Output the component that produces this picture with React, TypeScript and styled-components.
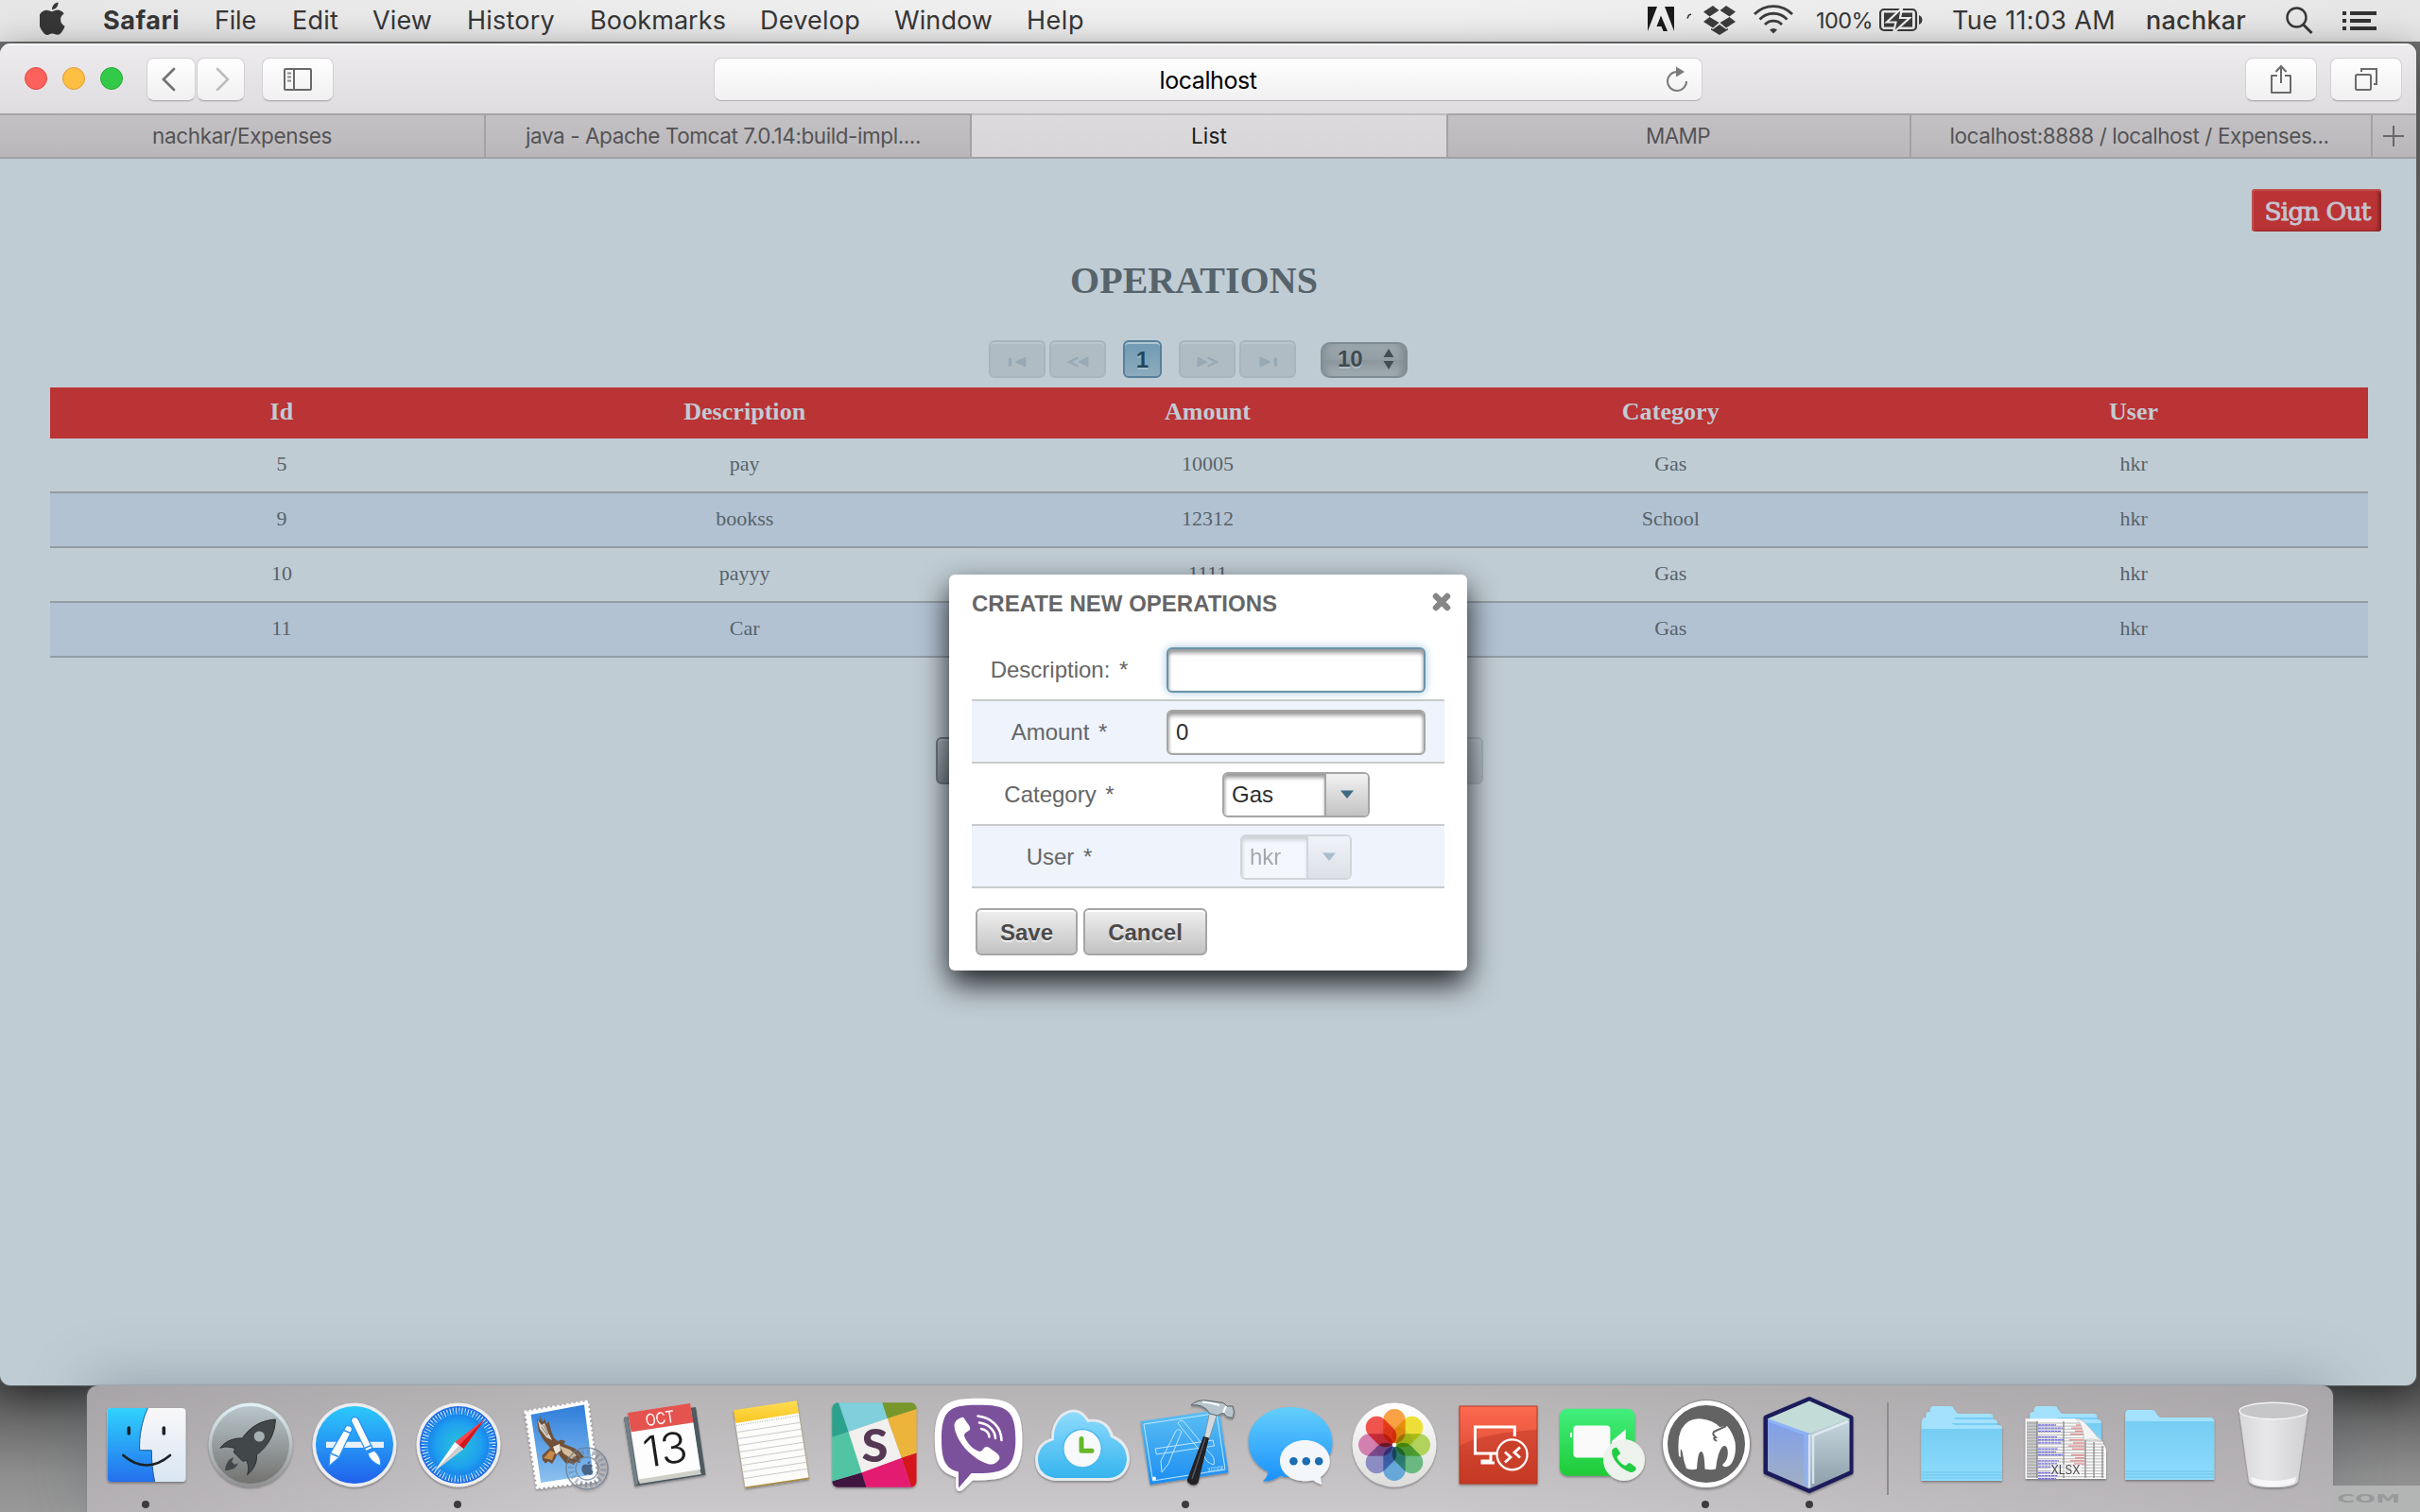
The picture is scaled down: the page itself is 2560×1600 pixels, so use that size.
import React, { useLayoutEffect, useRef, useState } from "react";
import styled, { createGlobalStyle, css } from "styled-components";

const GlobalStyle = createGlobalStyle`
  * { box-sizing: border-box; }
  html, body { margin: 0; padding: 0; }
  body { width: 2560px; height: 1600px; overflow: hidden; }
`;

const system = `Inter, "Helvetica Neue", sans-serif`;
const arial = `"Liberation Sans", Arial, sans-serif`;
const times = `"Liberation Serif", "Times New Roman", serif`;

/* ---------- text that spreads its letters over a given width ---------- */

const FitSpan = styled.span`
  display: inline-block;
  white-space: pre;
`;

function Fit({ width, children }: { width: number; children: string }) {
  const ref = useRef<HTMLSpanElement>(null);
  const [spacing, setSpacing] = useState(0);
  useLayoutEffect(() => {
    if (ref.current) {
      const natural = ref.current.getBoundingClientRect().width;
      setSpacing((width - natural) / children.length);
    }
  }, []);
  return (
    <FitSpan ref={ref} style={{ letterSpacing: spacing }}>
      {children}
    </FitSpan>
  );
}

/* ---------- desktop ---------- */

const Desktop = styled.div`
  width: 2560px;
  height: 1600px;
  overflow: hidden;
  display: flex;
  flex-direction: column;
  background: linear-gradient(#6e6e6e 0, #8c8c8c 60%, #565656 1466px, #8e8e8e 1560px, #999 1600px);
`;

const MenuBar = styled.header`
  height: 46px;
  flex: none;
  display: flex;
  align-items: center;
  padding: 0 46px 2px 42px;
  border-bottom: 2px solid #717173;
  background: linear-gradient(90deg, #e6e6e6, #f0f0f0 45%, #f0f0f0 60%, #e6e6e6);
  font: 400 27px/46px ${system};
  color: #373737;
`;

const MenuItem = styled.div<{ $w: number; $bold?: boolean }>`
  width: ${(p) => p.$w}px;
  height: 44px;
  flex: none;
  white-space: nowrap;
  font-weight: ${(p) => (p.$bold ? 700 : 400)};
`;

const Spacer = styled.div`
  flex: 1;
`;

const StatusItem = styled.div<{ $w: number; $size?: number; $weight?: number }>`
  width: ${(p) => p.$w}px;
  height: 44px;
  flex: none;
  white-space: nowrap;
  font-size: ${(p) => p.$size ?? 27}px;
  font-weight: ${(p) => p.$weight ?? 400};
  svg { display: block; }
`;

const BrowserWindow = styled.main`
  width: 2556px;
  height: 1420px;
  flex: none;
  display: flex;
  flex-direction: column;
  border-radius: 11px;
  overflow: hidden;
  background: #c0ccd4;
  box-shadow: 0 0 0 1px #5c5c5c, 0 10px 40px rgba(0, 0, 0, 0.5);
`;

const Toolbar = styled.div`
  height: 76px;
  flex: none;
  display: flex;
  align-items: center;
  padding: 0 15px 1px 26px;
  border-top: 2px solid #f7f6f7;
  border-bottom: 2px solid #a5a3a6;
  background: linear-gradient(#edebee, #dfdce0);
`;

const Light = styled.i<{ $fill: string; $edge: string }>`
  width: 24px;
  height: 24px;
  margin: 0 16px 1px 0;
  border-radius: 50%;
  background: ${(p) => p.$fill};
  border: 1px solid ${(p) => p.$edge};
`;

const ToolButton = styled.button<{ $w: number; $ml?: number }>`
  width: ${(p) => p.$w}px;
  height: 46px;
  margin: 0 0 0 ${(p) => p.$ml ?? 0}px;
  padding: 0;
  flex: none;
  border: 1px solid #d2d0d3;
  border-bottom-color: #b0aeb1;
  border-radius: 8px;
  background: linear-gradient(#fff, #f1f0f1);
  box-shadow: 0 1px 0 rgba(0, 0, 0, 0.08);
  svg { display: block; margin: 0 auto; }
`;

const UrlBar = styled.div`
  width: 1046px;
  height: 46px;
  margin-left: 402px;
  flex: none;
  display: grid;
  grid-template-columns: 50px 1fr 50px;
  align-items: center;
  text-align: center;
  border: 1px solid #d2d0d3;
  border-bottom-color: #b0aeb1;
  border-radius: 8px;
  background: linear-gradient(#fff, #f1f0f1);
  font: 400 25px/46px ${system};
  color: #000;
  svg { justify-self: center; }
`;

const TabStrip = styled.nav`
  height: 46px;
  flex: none;
  display: flex;
  border-bottom: 2px solid #a3a1a4;
  background: linear-gradient(#c3c1c4, #b9b7ba);
`;

const Tab = styled.div<{ $w: number; $active?: boolean; $pull?: number }>`
  width: ${(p) => p.$w}px;
  height: 44px;
  flex: none;
  text-align: center;
  padding-right: ${(p) => p.$pull ?? 0}px;
  font: 400 22.5px/44px ${system};
  color: #545355;
  border-right: 2px solid #a3a1a4;
  ${(p) =>
    p.$active &&
    css`
      margin-top: -2px;
      height: 46px;
      color: #1c1c1c;
      border-top: 2px solid #bfbdc0;
      background: linear-gradient(#dcdadd, #d7d5d8);
    `}
`;

const NewTab = styled.div`
  flex: 1;
  display: flex;
  align-items: center;
  justify-content: center;
  padding-right: 3px;
`;

/* ---------- page ---------- */

const Page = styled.section`
  flex: 1;
  position: relative;
  display: flex;
  flex-direction: column;
  align-items: center;
  color: #56636b;
`;

const SignOut = styled.button`
  align-self: flex-end;
  width: 137px;
  height: 45px;
  margin: 32px 37px 0 0;
  padding: 0;
  flex: none;
  border: 0;
  border-radius: 4px;
  background: #ba3335;
  box-shadow: inset 0 2px 1px #bf5450, inset 2px 0 1px #c0504e, inset -4px 0 3px -1px #7c2728,
    inset 0 -2px 2px #a02d2f;
  color: #c5c4d0;
  font: 400 26.5px/47px "DejaVu Serif", serif;
  white-space: nowrap;
`;

const SignText = styled.span`
  display: block;
  -webkit-text-stroke: 0.9px #c5c4d0;
  padding-left: 2px;
`;

const Heading = styled.h1`
  margin: 28px 0 0 -30px;
  height: 48px;
  flex: none;
  font: 700 40px/48px ${times};
`;

const Paginator = styled.div`
  height: 40px;
  width: 443px;
  margin: 39px 0 0 -21px;
  flex: none;
  display: flex;
  align-items: center;
`;

const PageButton = styled.button<{ $ml?: number }>`
  width: 60px;
  height: 40px;
  margin: 0 0 0 ${(p) => p.$ml ?? 0}px;
  padding: 0;
  flex: none;
  border: 2px solid #a8b5bd;
  border-radius: 6px;
  background: #b0bcc4;
  box-shadow: inset 0 2px 0 #bac7ce;
  svg { display: block; margin: 6px auto 0; }
`;

const CurrentPage = styled.button`
  width: 41px;
  height: 40px;
  margin: 0 0 0 18px;
  padding: 0;
  flex: none;
  border: 2px solid #57809a;
  border-radius: 6px;
  background: linear-gradient(#6f9bb4, #8dabbc);
  box-shadow: inset 0 2px 0 #b1c8d4;
  font: 700 24px/35px ${arial};
  color: #21465c;
  text-shadow: 0 2px 0 #a5bdca;
`;

const RowsSelect = styled.div`
  width: 92px;
  height: 38px;
  margin: 2px 0 0 26px;
  padding: 0 12px 2px 16px;
  flex: none;
  display: flex;
  align-items: center;
  justify-content: space-between;
  border: 2px solid #818c92;
  border-radius: 10px;
  background: linear-gradient(#9ba7ad, #939fa5 48%, #8b979d 52%, #a1adb3);
  box-shadow: inset 8px 0 6px -4px #87939a, inset -8px 0 6px -4px #7f8b91;
  font: 700 24px/34px ${arial};
  color: #3f4a51;
  text-shadow: 0 2px 0 #b1bdc4;
`;

const Table = styled.div`
  width: 2452px;
  margin: 10px 0 0 2px;
  flex: none;
`;

const HeadRow = styled.div`
  height: 54px;
  padding-right: 3px;
  display: grid;
  grid-template-columns: repeat(5, 1fr);
  background: #ba3335;
  color: #c1cbd4;
  font: 700 26px/52px ${times};
  text-align: center;
`;

const Row = styled.div<{ $alt: boolean }>`
  height: 58px;
  padding-right: 3px;
  display: grid;
  grid-template-columns: repeat(5, 1fr);
  border-bottom: 2px solid #929da3;
  background: ${(p) => (p.$alt ? "#b3c2d2" : "transparent")};
  font: 400 22px/54px ${times};
  text-align: center;
`;

const PageActions = styled.div`
  width: 579px;
  height: 50px;
  margin: 84px 0 0 3px;
  flex: none;
  display: flex;
  justify-content: space-between;
`;

const ActionButton = styled.div<{ $w: number; $faded?: boolean }>`
  width: ${(p) => p.$w}px;
  height: 50px;
  border: 2px solid ${(p) => (p.$faded ? "#a7b3ba" : "#6f7b82")};
  border-radius: 6px;
  background: ${(p) => (p.$faded ? "linear-gradient(#b8c4cc,#abb7bf)" : "linear-gradient(#a8b3ba,#828e95)")};
  box-shadow: inset 0 2px 0 ${(p) => (p.$faded ? "#bcc8d0" : "#b4bfc6")};
`;

/* ---------- dialog ---------- */

const Dialog = styled.div`
  position: absolute;
  left: 1004px;
  top: 440px;
  width: 548px;
  height: 419px;
  padding: 0 24px;
  border-radius: 6px;
  background: #fff;
  box-shadow: 0 14px 32px rgba(0, 0, 0, 0.85);
  font: 400 24px/28px ${arial};
  color: #666;
`;

const DialogHead = styled.div`
  height: 68px;
  padding: 0 0 7px 0;
  display: flex;
  align-items: center;
  justify-content: space-between;
  font-weight: 700;
  svg { margin: -3px -7px 0 0; }
`;

const FormRow = styled.div<{ $alt?: boolean }>`
  height: 66px;
  display: grid;
  grid-template-columns: 185px 316px;
  align-items: center;
  border-bottom: 2px solid #c9cbcc;
  background: ${(p) => (p.$alt ? "#eef3fc" : "#fff")};
`;

const Label = styled.label`
  text-align: center;
  padding-top: 1px;
  white-space: pre;
`;

const Star = styled.span`
  margin-left: 3px;
`;

const Field = styled.div<{ $focus?: boolean }>`
  width: 274px;
  height: 48px;
  margin: 2px auto 0;
  padding-left: 8px;
  border: 2px solid ${(p) => (p.$focus ? "#6b95ad" : "#a5a5a5")};
  border-radius: 6px;
  background: #fff;
  box-shadow: inset 0 5px 4px -1px #999, inset 2px 0 2px #ddd, inset -2px 0 2px #ddd
    ${(p) => (p.$focus ? ", 0 0 10px #9dc4da" : "")};
  font: 400 24px/44px ${arial};
  color: #2e2e2e;
`;

const Combo = styled.div<{ $w: number; $disabled?: boolean }>`
  width: ${(p) => p.$w}px;
  height: 48px;
  margin: 2px auto 0;
  display: flex;
  border: 2px solid #a5a5a5;
  border-radius: 6px;
  overflow: hidden;
  background: #fff;
  line-height: 44px;
  color: #2e2e2e;
  opacity: ${(p) => (p.$disabled ? 0.38 : 1)};
`;

const ComboValue = styled.div`
  flex: 1;
  padding-left: 8px;
  box-shadow: inset 0 5px 4px -1px #999, inset 2px 0 2px #ddd;
`;

const ComboArrow = styled.div`
  width: 46px;
  display: flex;
  align-items: center;
  justify-content: center;
  border-left: 2px solid #a5a5a5;
  background: linear-gradient(#f2f2f2, #c3c3c3);
`;

const DialogActions = styled.div`
  display: flex;
  gap: 6px;
  padding: 21px 0 0 4px;
`;

const DialogButton = styled.button<{ $w: number }>`
  width: ${(p) => p.$w}px;
  height: 50px;
  padding: 0;
  border: 2px solid #a5a5a5;
  border-radius: 6px;
  background: linear-gradient(#f0f0f0, #c2c2c2);
  box-shadow: inset 0 2px 0 #fff;
  font: 700 24px/48px ${arial};
  color: #4b4b4b;
  text-shadow: 0 2px 0 #eee;
`;

/* ---------- dock ---------- */

const DockArea = styled.footer`
  height: 134px;
  flex: none;
  display: flex;
  position: relative;
`;

const Dock = styled.div`
  width: 2376px;
  height: 134px;
  margin-left: 92px;
  flex: none;
  padding-left: 8px;
  display: flex;
  border-radius: 12px 12px 0 0;
  background: linear-gradient(90deg, rgba(140, 136, 140, 0.35), rgba(140, 136, 140, 0) 22%, rgba(140, 136, 140, 0) 60%, rgba(140, 136, 140, 0.3)),
    linear-gradient(#b6b3b5, #cbc8cb);
  box-shadow: 0 0 2px #777, 0 -6px 60px rgba(80, 95, 105, 0.35);
`;

const Slot = styled.div<{ $w?: number }>`
  width: ${(p) => p.$w ?? 110}px;
  height: 134px;
  flex: none;
  svg { display: block; overflow: visible; }
`;

const Wallpaper = styled.div`
  flex: 1;
  display: flex;
  flex-direction: column;
  justify-content: flex-end;
`;

const WallpaperStrip = styled.div`
  height: 28px;
  padding-left: 4px;
  background: #b3b4b4;
  color: #97999a;
  font: 700 13px/28px "DejaVu Sans", sans-serif;
  white-space: nowrap;
`;

const WideText = styled.span`
  display: inline-block;
  transform: scaleX(2);
  transform-origin: 0 50%;
`;

function DockIcon({ children, running }: { children: React.ReactNode; running?: boolean }) {
  return (
    <Slot>
      <svg width="110" height="134" viewBox="0 0 110 134">
        <g filter="url(#soft)">{children}</g>
        {running && <circle cx="54" cy="126" r="4" fill="#3c3b3d" />}
      </svg>
    </Slot>
  );
}

const Grad = ({ id, a, b }: { id: string; a: string; b: string }) => (
  <linearGradient id={id} x1="0" y1="0" x2="0" y2="1">
    <stop offset="0" stopColor={a} />
    <stop offset="1" stopColor={b} />
  </linearGradient>
);

const petals = ["#f8952a", "#eddc1c", "#a9cf46", "#58b373", "#55a0d8", "#7f7fc0", "#d070a8", "#ee3e36"];

const handset =
  "M6 1 C3 2 0 5 0 9 C1 24 17 43 34 48 C38 49 42 46 44 43 C45 41 44 39 42 37 L34 31 C32 30 30 30 28 33 C26 36 24 35 22 34 C16 31 12 25 10 20 C9 17 11 16 14 14 C16 13 16 11 14 8 L10 2 C9 0 8 0 6 1 Z";

const applePath =
  "M21.500 7.200 C20.200 8.800 18 9.900 15.900 9.800 C15.600 7.600 16.700 5.300 17.900 3.900 C19.200 2.300 21.500 1.100 23.400 1 C23.600 3.200 22.800 5.500 21.500 7.200 Z M23.400 10.300 C20.200 10.100 17.500 12.100 16 12.100 C14.400 12.100 12.100 10.400 9.500 10.400 C6 10.500 2.900 12.400 1.200 15.500 C-2.300 21.600 0.300 30.600 3.700 35.600 C5.300 38 7.300 40.700 9.900 40.600 C12.400 40.500 13.400 39 16.300 39 C19.300 39 20.200 40.600 22.800 40.500 C25.500 40.500 27.200 38.100 28.800 35.600 C30.700 32.800 31.500 30.100 31.500 29.900 C31.400 29.900 26.400 27.900 26.300 22.100 C26.300 17.200 30.300 14.900 30.500 14.800 C28.200 11.400 24.700 10.400 23.400 10.300 Z";

function Folder({ y, x, w, h }: { x: number; y: number; w: number; h: number }) {
  return (
    <g>
      <path
        d={`M${x} ${y + 5} q0 -5 4 -5 h${w * 0.26} q3 0 4 3 l3 4 q1 1 3 1 H${x + w - 4} q4 0 4 4 V${y + h} H${x} Z`}
        fill="#a3e1fd"
      />
      <path d={`M${x} ${y + 12} H${x + w} V${y + h - 2} q0 2 -2 2 H${x + 2} q-2 0 -2 -2 Z`} fill="url(#folder)" />
      <path d={`M${x} ${y + h - 9} h${w} M${x} ${y + h - 6} h${w} M${x} ${y + h - 3} h${w}`} stroke="#68c1e6" strokeWidth="0.9" />
    </g>
  );
}

function DockIcons() {
  return (
    <>
      <DockIcon running>
        <rect x="13.5" y="24" width="83" height="78" rx="4" fill="url(#finderR)" />
        <path d="M17.500 24 H56.300 C50 38 47 54 47.700 68.700 H60.300 C60.300 80 61.500 92 63.700 102 H17.500 Q13.500 102 13.500 98 V28 Q13.500 24 17.500 24 Z" fill="url(#finderL)" />
        <path d="M56.300 24 C50 38 47 54 47.700 68.700 H60.300 C60.300 80 61.500 92 63.700 102" fill="none" stroke="#1b5a92" strokeWidth="1" />
        <path d="M36.300 45 V51 M73.300 45 V51" stroke="#1b2126" strokeWidth="3.600" strokeLinecap="round" />
        <path d="M30.300 74 Q55 95 80 74" fill="none" stroke="#1b2126" strokeWidth="2.600" strokeLinecap="round" />
      </DockIcon>

      <DockIcon>
        <circle cx="55" cy="63" r="44.500" fill="url(#ring)" />
        <circle cx="55" cy="63" r="41" fill="url(#launch)" />
        <path d="M81.400 36 C67 37 55 43 46.300 56 C39 55.500 29 58 23 66.300 C29 64 34 65.500 38.500 66.500 L37.500 71 L47 80.500 L50.500 79 C53 84 53.500 89 51.600 94.700 C59 89 62 81 61.500 73.500 C74 64 81 51 81.400 36 Z" fill="#43474a" stroke="#2b2e30" strokeWidth="1" />
        <circle cx="64.300" cy="54" r="5.600" fill="#a5b0b4" />
        <path d="M37.500 76 C31 78 29 83 28 90 C35 90 40 88 42 82 L38.500 84 L35 81 Z" fill="#43474a" />
      </DockIcon>

      <DockIcon>
        <circle cx="55" cy="63" r="44.500" fill="#ececee" />
        <circle cx="55" cy="63" r="41" fill="url(#store)" />
        <rect x="25" y="59.700" width="61" height="6.300" fill="#e9f1fb" />
        <g stroke="#2a8ff4" strokeWidth="1.200" fill="#fbfcfe">
          <path d="M45 45 q1.500 -3.500 5 -2 q3.500 1.500 2 5 L38.500 76.500 L28 85.500 L29 72.500 Z" />
          <path d="M51.500 38 q0 -4 3.500 -4.500 q3 0 4.500 3 L74 66.500 L67 69.500 Z" />
          <path d="M69 72 L76 69 Q84 76 82.500 85 Q71 81 69 72 Z" />
        </g>
        <path d="M43.500 47.500 l8 3.200 M30 72 l8 3.500 M65.500 66.500 l8 -3.400" stroke="#2a8ff4" strokeWidth="1.500" />
      </DockIcon>

      <DockIcon running>
        <circle cx="55" cy="63" r="44.500" fill="#efeff0" />
        <circle cx="55" cy="63" r="41" fill="url(#safari)" />
        <circle cx="55" cy="63" r="36" fill="none" stroke="#d9f0fd" strokeWidth="7" strokeDasharray="1 2.142" />
        <circle cx="55" cy="63" r="34" fill="none" stroke="#23a0ee" strokeWidth="4" strokeDasharray="1.500 4.433" />
        <path d="M82.700 35.700 L51.200 60 L60.200 67.300 Z" fill="#f5454b" />
        <path d="M82.700 35.700 L55.700 63.500 L60.200 67.300 Z" fill="#d3151d" />
        <path d="M29.600 90.700 L51.200 60 L60.200 67.300 Z" fill="#fff" />
        <path d="M29.600 90.700 L55.700 63.500 L60.200 67.300 Z" fill="#cdcdd0" />
      </DockIcon>

      <DockIcon>
        <path d="M16 28 L81.500 17 L91.500 101 L28.500 108.500 Z" fill="#fff" stroke="#fff" strokeWidth="3.500" strokeDasharray="0 5" strokeLinecap="round" />
        <path d="M21.600 31 L78 20.500 L87.500 94.500 L32.200 103 Z" fill="url(#sky)" />
        <path d="M28 34 L30 39 L31.500 32.500 L34 39 L36 35 L38 41 L40.500 38 L43 48 L46 55.500 L50 59 L54 57.500 L58 59 L56.500 62 Q66 65 73 70 L78 76 L73 77.500 L74 82 L69 81 L67 84 L62 82 L59 83 L54 77 L50 72 L47 78 L44 83 L40 80.500 L37 82.500 L34 79 L33.500 74 L42 66 L35 58 L29.500 48 Z" fill="#6f5138" />
        <path d="M29 37 L33 42 L36 40 L40 50 L44 58 L38 55 L31 46 Z" fill="#d8d4cc" />
        <path d="M33 44 L39 53 M35 42 L40 52" stroke="#8d7b68" strokeWidth="1" />
        <path d="M52 64 L63 68 L70 74 L65 78 L56 72 Z" fill="#d2bc9c" />
        <path d="M45 65 L52 62 L53 69 L48 73 Z" fill="#ece5da" />
        <path d="M35 77 L42 69 L47 71 L44 79 Z" fill="#c98b4a" />
        <g fill="none" stroke="#6d7c90" opacity="0.75">
          <circle cx="81" cy="88" r="22" strokeWidth="1.600" />
          <circle cx="81" cy="88" r="17" strokeWidth="6" strokeDasharray="2.400 2.900" opacity="0.65" />
          <circle cx="81" cy="88" r="12" strokeWidth="1.400" />
        </g>
        <g transform="translate(75.500 79.500) scale(0.380)">
          <path d={applePath} fill="#4c6384" />
        </g>
      </DockIcon>

      <DockIcon>
        <path d="M10 34 L86 23 L96.500 94.700 L21.600 106.700 Z" fill="#4d5a60" />
        <path d="M10 34 L14 33 L25 104 L21.600 106.700 Z" fill="#728087" />
        <path d="M14 29 L80 19 L91 92 L92 94 L27 104 L25 100 Z" fill="#cfcfca" />
        <path d="M17.800 49.300 L83.400 39.300 L91 89 L25.800 99.500 Z" fill="#fdfdfd" />
        <path d="M14 29 L80 19 L83.400 39.300 L17.800 49.300 Z" fill="#e5524f" />
        <text transform="translate(49 41) rotate(-8.600)" textAnchor="middle" fontFamily={system} fontSize="17.500" fill="#fff" textLength="31" lengthAdjust="spacingAndGlyphs">OCT</text>
        <text transform="translate(56 83.500) rotate(-8.600)" textAnchor="middle" fontFamily={system} fontSize="45" fontWeight="300" fill="#1d1d1d" textLength="47" lengthAdjust="spacingAndGlyphs">13</text>
      </DockIcon>

      <DockIcon>
        <path d="M16 27 L83 17 L96 99 L28.500 109 Z" fill="#a98c3c" />
        <path d="M17.500 37 L84.500 27 L95.500 97.500 L28.300 107.500 Z" fill="#fcfcfa" />
        <path d="M16 26.300 L82.900 16.300 L85 29.300 L18 40 Z" fill="url(#notes)" />
        <path d="M19 42.500 L85.500 32" stroke="#aaa" strokeWidth="1" strokeDasharray="1 1.500" />
        <g stroke="#c3c4c8" strokeWidth="0.900">
          {[0, 1, 2, 3, 4, 5, 6, 7].map((i) => (
            <path key={i} d={`M${19.800 + i * 1.050} ${49.500 + i * 7} L${86.500 + i * 1.050} ${39.300 + i * 7}`} />
          ))}
        </g>
      </DockIcon>

      <DockIcon>
        <clipPath id="slackClip"><rect x="10.300" y="18.300" width="89.200" height="89.400" rx="6" /></clipPath>
        <g clipPath="url(#slackClip)">
          <path d="M10 18 H17 L27.600 49 L10 55 Z" fill="#2ba28e" />
          <path d="M17 18 H63.300 L68.800 35 L27.600 49 Z" fill="#7fcfdd" />
          <path d="M63.300 18 H100 V25 L68.800 35 Z" fill="#77972c" />
          <path d="M68.800 35 L100 25 V71.500 L83.600 76.700 Z" fill="#edb43a" />
          <path d="M83.600 76.700 L100 71.500 V108 H94 Z" fill="#d4161c" />
          <path d="M41.500 92.300 L83.600 76.700 L94 108 H46.500 Z" fill="#e31e72" />
          <path d="M10 101.500 L41.500 92.300 L46.500 108 H10 Z" fill="#3f1440" />
          <path d="M10 55 L27.600 49 L41.500 92.300 L10 101.500 Z" fill="#51c5a3" />
          <path d="M27.600 49 L68.800 35 L83.600 76.700 L41.500 92.300 Z" fill="#f2f0ee" />
        </g>
        <text x="55.500" y="80.500" textAnchor="middle" fontFamily="Lato, sans-serif" fontWeight="900" fontSize="47" fill="#553753" textLength="28" lengthAdjust="spacingAndGlyphs">S</text>
      </DockIcon>

      <DockIcon>
        <path d="M55 13.700 C86 13.700 101.500 18 101.500 57 C101.500 90 91 100 56 100.500 L49 100.500 L38 111 Q32 114 31 107 V97 C14 92 8.900 82 8.900 57 C8.900 18 24 13.700 55 13.700 Z" fill="#fff" />
        <path d="M55 20.700 C84 20.700 94.300 25 94.300 57 C94.300 87 83 93 55 93 L47.500 93 L34 108.500 V91.500 C20 88 16 79 16 57 C16 25 26 20.700 55 20.700 Z" fill="#7b519b" />
        <g transform="translate(29.500 33.500) scale(1.080 1.040)">
          <path d={handset} fill="#fff" />
        </g>
        <g fill="none" stroke="#fff" strokeWidth="2.600" strokeLinecap="round">
          <path d="M54.500 32.500 C69 34 79 44 79.500 58" />
          <path d="M56 39.500 C66 41 72.500 47.500 73 56" />
          <path d="M58 46 C63.500 47 66 50 66.500 54.500" />
        </g>
      </DockIcon>

      <DockIcon>
        <path d="M26 101 Q5 98 5 78 Q6 61 22 56 Q22 41 32 31 Q50 18 62 36 Q82 34 88 53 Q105 60 105 79 Q103 98 84 101 Z" fill="#e5eaee" />
        <path d="M26 98 Q8 95 8 77.500 Q9 62 25 58 Q24 42 34 33 Q50 21 60.500 39 Q80 36 85 55 Q102 62 102 79 Q100 96 84 98 Z" fill="url(#cloud)" />
        <circle cx="55" cy="66.700" r="21" fill="#4cb9ef" />
        <circle cx="55" cy="66.700" r="19.500" fill="#f8f9fa" />
        <path d="M54 56.500 V69.300 H65" fill="none" stroke="#67b72b" strokeWidth="5" strokeLinecap="round" strokeLinejoin="round" />
      </DockIcon>

      <DockIcon running>
        <path d="M6.500 38 L89.800 26 L99.600 92.300 L16.600 105 Z" fill="url(#xcode)" />
        <g fill="none" stroke="#bfe6fb" strokeWidth="1">
          <path d="M10 41 L87 29.500 L96 89 L19.500 101 Z" />
          <path d="M22 67 L83 58 L84.500 64 L23.500 73 Z" />
          <path d="M44 48 q3 -3 6 1 L36 83 L29 92 L28 80 Z" />
          <path d="M46 40 q3 -5 7 -1 L79 71 Q86 76 84 84 Q76 82 74 75 Z" />
        </g>
        <circle cx="21" cy="98.500" r="2" fill="#fff" />
        <text transform="translate(78 92) rotate(-8.600)" fontFamily={system} fontSize="6.500" fill="#c9eafc" textLength="17" lengthAdjust="spacingAndGlyphs">XCODE</text>
        <path d="M80 27 L88 29 L79 57 L74 55 Z" fill="#d3dadf" stroke="#77828a" strokeWidth="0.700" />
        <path d="M73 54 L79 55.500 L67.500 103 Q63 108 57 103 Q55 101 56.500 98 Z" fill="#202225" />
        <path d="M75 56 L61 99" stroke="#55595e" strokeWidth="1.500" />
        <path d="M60 21 Q66 15 76 16 L94 18.500 L98 22 L104 22 Q107 28 104 34.500 L98 33.500 L94 29 L88 32 L80 30 Q73 19 60 21 Z" fill="#b9c5cc" stroke="#56626a" strokeWidth="1" />
        <path d="M97 22 L94 29 M72 17.500 Q80 18 90 21" fill="none" stroke="#fff" strokeWidth="2" />
      </DockIcon>

      <DockIcon>
        <path d="M55 23 C80 23 99.500 39 99.500 60 C99.500 82 80 97 55 97 C51 97 47 96.500 44 96 Q35 102 25.800 101.500 Q31 97 31.500 91.500 C18 85 10.600 73 10.600 60 C10.600 39 30 23 55 23 Z" fill="url(#msg)" />
        <path d="M70.400 58 C85 58 96.800 67.500 96.800 80 C96.800 87 93 92.500 87 97 Q87 101 88.500 105 Q83 104 79.500 100.500 C60 104 44 95 44 80 C44 67.500 56 58 70.400 58 Z" fill="#f3f6fa" />
        <g fill="#1b6cb0">
          <circle cx="58.400" cy="80.300" r="4.300" />
          <circle cx="71.800" cy="80.300" r="4.300" />
          <circle cx="85.200" cy="80.300" r="4.300" />
        </g>
      </DockIcon>

      <DockIcon>
        <circle cx="55" cy="63" r="44.500" fill="url(#photos)" />
        <g style={{ isolation: "isolate" }}>
          <circle cx="55" cy="63" r="20" fill="#f3f3f3" />
          {petals.map((c, i) => (
            <rect key={c} x="43.300" y="25" width="23.400" height="36.500" rx="11.700" fill={c} opacity="0.88" transform={`rotate(${i * 45} 55 63)`} style={{ mixBlendMode: "multiply" }} />
          ))}
        </g>
        <circle cx="55" cy="63" r="2.200" fill="#fff" />
      </DockIcon>

      <DockIcon>
        <rect x="14" y="22" width="82" height="82" fill="url(#rdp)" stroke="#b63a27" strokeWidth="1" />
        <path d="M14 64 Q40 50 96 47 V104 H14 Z" fill="#b5301e" opacity="0.4" />
        <path d="M55 72 H30.500 V44 H72.300 V54" fill="none" stroke="#fff" strokeWidth="3" />
        <path d="M47 73 V80 H38 V82 H51" fill="none" stroke="#fff" strokeWidth="3" />
        <circle cx="69.600" cy="73.300" r="16" fill="#c93f2b" stroke="#fff" strokeWidth="2.200" />
        <path d="M62 70.500 L68 76 L62 81.500 M78 65.500 L72 71 L78 76.500" fill="none" stroke="#fff" strokeWidth="2.800" />
      </DockIcon>

      <DockIcon>
        <rect x="10" y="24.700" width="79.500" height="71" rx="8" fill="url(#ft)" />
        <rect x="24.400" y="42.500" width="39" height="34" rx="4" fill="#fafafa" />
        <path d="M65 59 L79.700 46.500 V72 L65 63 Z" fill="#fafafa" />
        <path d="M22 50 V55" stroke="#fff" strokeWidth="2" />
        <circle cx="78" cy="79" r="22" fill="#edf2ed" />
        <g transform="translate(65 65.500) scale(0.580 0.550)">
          <path d={handset} fill="#22cd44" />
        </g>
      </DockIcon>

      <DockIcon running>
        <circle cx="55" cy="62" r="47" fill="#8c8a8c" />
        <circle cx="55" cy="62" r="46" fill="#fff" />
        <circle cx="55" cy="62" r="41" fill="#636363" />
        <path d="M26 75 Q24 55 29 46 Q36 34 50 35.500 Q62 36.500 69 44 L77 43 Q83 50 85.500 60 Q87 72 83 80 Q80 87 74 86 Q71 85 73 83 Q79 78 77.500 68 Q76 62 72 65 Q67 70 65 88.500 Q60 90 53.500 88.500 Q53 70 49.500 70 Q46 70 45 88.500 Q39 90 34 88 Q31 80 29.500 70 Q27 63 28 76 Z" fill="#fff" />
        <path d="M76 43 L63 49 Q61 52 65 55 Q61 56 66 59" fill="none" stroke="#636363" strokeWidth="2" />
      </DockIcon>

      <DockIcon running>
        <path d="M54 14.500 L98 34 V92 L54 111.500 L8 92 V34 Z" fill="#9dafd6" stroke="#1b1f5c" strokeWidth="5" strokeLinejoin="round" />
        <path d="M54 16.500 L97 35.500 L54 51 L9.500 35.500 Z" fill="#c4dcd8" />
        <path d="M10 36 L54 51 V109.500 L10 90.500 Z" fill="url(#nbL)" />
        <path d="M96.500 36 L54 51 V109.500 L96.500 90.500 Z" fill="url(#nbR)" />
        <path d="M50 53 V106" stroke="#8fb3f4" strokeWidth="4" opacity="0.7" />
        <path d="M54 52 V108" stroke="#d5e3f8" strokeWidth="2.500" />
        <path d="M95 38 L58 53 V104" fill="none" stroke="#e6f0f5" strokeWidth="2.500" opacity="0.8" />
        <path d="M11 37 L52 52" stroke="#8db4f6" strokeWidth="3" />
      </DockIcon>

      <Slot $w={50}>
        <svg width="50" height="134" viewBox="0 0 50 134">
          <path d="M27 18 V116" stroke="#8e8c8e" strokeWidth="2" />
        </svg>
      </Slot>

      <DockIcon>
        <Folder x={21.500} y={22} w={67} h={40} />
        <Folder x={17} y={28} w={76} h={50} />
        <Folder x={12.700} y={34} w={85.300} h={67} />
      </DockIcon>

      <DockIcon>
        <Folder x={21.500} y={22} w={67} h={40} />
        <Folder x={17} y={28} w={76} h={50} />
        <path d="M12.500 35.300 H68 L94 59 L98 68 V99 H12.500 Z" fill="#fafafa" />
        <rect x="14" y="38" width="11" height="60" fill="#c9c9c9" />
        <path d="M25 38 V98 M53 38 V98 M76 58 V98 M85 60 V98 M94 64 V98" stroke="#555" strokeWidth="0.900" />
        {Array.from({ length: 19 }, (_, i) => (
          <g key={i}>
            <path d={`M14 ${40 + i * 3.150} H${i < 6 ? 74 : 96}`} stroke="#888" strokeWidth="0.600" />
            {i % 4 !== 3 && <path d={`M26 ${42 + i * 3.150} h${19 + ((i * 7) % 9)}`} stroke="#6d69ee" strokeWidth="1.300" strokeDasharray="3 0.500" />}
            {i % 5 !== 4 && i < 14 && <path d={`M${66 - ((i * 5) % 9)} ${42 + i * 3.150} H75`} stroke="#ee8a8a" strokeWidth="1.300" />}
          </g>
        ))}
        <path d="M66 35.300 Q74 42 74.500 58 Q85 55 93 60 Q84 48 74 38 Q70 35 66 35.300 Z" fill="#f4f4f4" stroke="#bbb" strokeWidth="0.800" />
        <rect x="39" y="83.500" width="33" height="11" fill="#fafafa" opacity="0.6" />
        <text x="55" y="93.500" textAnchor="middle" fontFamily={system} fontSize="13" fill="#4a4a4a" textLength="31" lengthAdjust="spacingAndGlyphs">XLSX</text>
      </DockIcon>

      <DockIcon>
        <Folder x={8.200} y={26} w={94} h={74} />
      </DockIcon>

      <DockIcon>
        <path d="M18.700 27 L29 101 Q31 108 55 108 Q79 108 81 101 L91.400 27 Z" fill="url(#trash)" />
        <ellipse cx="55" cy="27" rx="36" ry="8.700" fill="#c6c6c8" stroke="#f3f3f4" strokeWidth="1.400" />
        <path d="M31 97 Q55 105 79 97 L78 102 Q74 107 55 107 Q35 107 32 102 Z" fill="#fbfbfc" opacity="0.8" />
      </DockIcon>
    </>
  );
}

function Defs() {
  return (
    <svg width="0" height="0" style={{ position: "absolute" }}>
      <defs>
        <filter id="soft" x="-20%" y="-20%" width="140%" height="140%">
          <feDropShadow dx="0" dy="1.500" stdDeviation="1.300" floodColor="#000" floodOpacity="0.350" />
        </filter>
        <Grad id="finderL" a="#30d3fd" b="#2470ee" />
        <Grad id="finderR" a="#f8f7f8" b="#d9e6f3" />
        <Grad id="ring" a="#e2f3f8" b="#8f9091" />
        <Grad id="launch" a="#b9c6cb" b="#72726f" />
        <Grad id="store" a="#2dc9fb" b="#1f60ec" />
        <radialGradient id="safari">
          <stop offset="0" stopColor="#27c3d8" />
          <stop offset="0.600" stopColor="#1f9ff0" />
          <stop offset="1" stopColor="#1c68e4" />
        </radialGradient>
        <Grad id="sky" a="#2f7ddb" b="#8cc3f0" />
        <Grad id="notes" a="#ffdd55" b="#f8c51f" />
        <Grad id="cloud" a="#8fdbfd" b="#35b4ee" />
        <Grad id="xcode" a="#5cc0f3" b="#1b8df2" />
        <Grad id="msg" a="#63cffb" b="#1a91fc" />
        <Grad id="photos" a="#ffffff" b="#dcdcdb" />
        <Grad id="rdp" a="#fd6a50" b="#cf3e28" />
        <Grad id="ft" a="#41ef7d" b="#1fcb37" />
        <Grad id="nbL" a="#7f9fec" b="#a3b0c2" />
        <Grad id="nbR" a="#c6d6de" b="#8c9da8" />
        <Grad id="folder" a="#76cdf4" b="#8edcfb" />
        <linearGradient id="trash">
          <stop offset="0" stopColor="#d8d8da" />
          <stop offset="0.400" stopColor="#e8e8ea" />
          <stop offset="1" stopColor="#d0d0d3" />
        </linearGradient>
      </defs>
    </svg>
  );
}

/* ---------- data ---------- */

const menus: [string, number, number][] = [
  ["File", 82, 44],
  ["Edit", 85, 49],
  ["View", 100, 63],
  ["History", 130, 93],
  ["Bookmarks", 180, 144],
  ["Develop", 142, 106],
  ["Window", 140, 104],
  ["Help", 80, 61],
];

const columns: [string, number][] = [
  ["Id", 25], ["Description", 129], ["Amount", 91], ["Category", 103], ["User", 52],
];

const rows = [
  ["5", "pay", "10005", "Gas", "hkr"],
  ["9", "bookss", "12312", "School", "hkr"],
  ["10", "payyy", "1111", "Gas", "hkr"],
  ["11", "Car", "", "Gas", "hkr"],
];

const pagerIcons = {
  first: { line: "M7 9.500 V18.500 M8 9.500 V18.500", solid: "M24 9 V19 L13 14 Z" },
  prev: { line: "M15.500 9.500 L6 14 L15.500 18.500", solid: "M26 9 V19 L16 14 Z" },
  next: { line: "M15.500 9.500 L25 14 L15.500 18.500", solid: "M5 9 V19 L15 14 Z" },
  last: { line: "M23 9.500 V18.500 M24 9.500 V18.500", solid: "M7 9 V19 L18 14 Z" },
};

function PagerIcon({ kind }: { kind: keyof typeof pagerIcons }) {
  return (
    <svg width="30" height="28" viewBox="0 0 30 28">
      <path d={pagerIcons[kind].line} fill="none" stroke="#97a9b5" strokeWidth="2.400" />
      <path d={pagerIcons[kind].solid} fill="#97a9b5" stroke="#97a9b5" strokeWidth="1" />
    </svg>
  );
}

const Arrow = () => (
  <svg width="16" height="10" viewBox="0 0 16 10">
    <path d="M1 0.500 H15 L8 9 Z" fill="#3f6a82" />
  </svg>
);

export default function App() {
  return (
    <Desktop>
      <GlobalStyle />
      <Defs />
      <MenuBar>
        <MenuItem $w={67}>
          <svg width="28" height="40" viewBox="0 0 32 46">
            <path d={applePath} transform="translate(-1 3)" fill="#373737" />
          </svg>
        </MenuItem>
        <MenuItem $w={118} $bold><Fit width={81}>Safari</Fit></MenuItem>
        {menus.map(([label, w, textWidth]) => (
          <MenuItem key={label} $w={w}><Fit width={textWidth}>{label}</Fit></MenuItem>
        ))}
        <Spacer />
        <StatusItem $w={59}>
          <svg width="48" height="44" viewBox="0 0 48 44">
            <path d="M1 8 H11 L1 34 Z M19 8 H29 V34 Z" fill="#1a1a1a" />
            <path d="M15 17.500 L22 34 H17.500 L15.500 29 H10.500 Z" fill="#1a1a1a" />
            <path d="M43 20.500 L44.500 17 L47 16" stroke="#373737" strokeWidth="1.600" fill="none" />
          </svg>
        </StatusItem>
        <StatusItem $w={54}>
          <svg width="38" height="44" viewBox="0 0 38 44">
            <path d="M1 13.500 L11 7 L17.500 12 L7.500 18.500 Z M18.500 12 L25 7 L35 13.500 L28.500 18.500 Z M1 24 L7.500 19 L17.500 25 L11 30.500 Z M28.500 19 L35 24 L25 30.500 L18.500 25 Z M11 32 L18 27 L25 32 L27 31 V32.500 L18 38 L9 32.500 V31 Z" fill="#3c3c3c" />
          </svg>
        </StatusItem>
        <StatusItem $w={66}>
          <svg width="44" height="44" viewBox="0 0 44 44">
            <g fill="none" stroke="#3c3c3c" strokeWidth="2.800">
              <path d="M1 16 A28 28 0 0 1 41 16" />
              <path d="M6.500 21.500 A20 20 0 0 1 35.500 21.500" />
              <path d="M12 27 A12.500 12.500 0 0 1 30 27" />
            </g>
            <path d="M17 32.500 Q21 29.500 25 32.500 L21 36.500 Z" fill="#3c3c3c" />
          </svg>
        </StatusItem>
        <StatusItem $w={67} $size={23.500}><Fit width={60}>100%</Fit></StatusItem>
        <StatusItem $w={77}>
          <svg width="46" height="44" viewBox="0 0 46 44">
            <rect x="1" y="11" width="38" height="22" rx="4" fill="none" stroke="#3c3c3c" strokeWidth="2.200" />
            <rect x="5" y="14.500" width="30" height="15" fill="#3c3c3c" />
            <path d="M42 17 Q45.500 18.500 45.500 22 Q45.500 25.500 42 27 Z" fill="#3c3c3c" />
            <path d="M24 9.500 L8 24.500 H17.500 L15 35.500 L32 20 H22 Z" fill="#3c3c3c" stroke="#efefef" strokeWidth="2.200" />
          </svg>
        </StatusItem>
        <StatusItem $w={205}><Fit width={173}>Tue 11:03 AM</Fit></StatusItem>
        <StatusItem $w={148} $weight={500}><Fit width={106}>nachkar</Fit></StatusItem>
        <StatusItem $w={60}>
          <svg width="30" height="44" viewBox="0 0 30 44">
            <circle cx="11.500" cy="19.500" r="10" fill="none" stroke="#373737" strokeWidth="2.400" />
            <path d="M18.500 27 L27.500 36" stroke="#373737" strokeWidth="3" />
          </svg>
        </StatusItem>
        <StatusItem $w={36}>
          <svg width="36" height="44" viewBox="0 0 36 44">
            <path d="M0 15 H4 M8 15 H36 M0 23 H4 M8 23 H30 M0 31 H4 M8 31 H36" stroke="#333" strokeWidth="4" />
          </svg>
        </StatusItem>
      </MenuBar>

      <BrowserWindow>
        <Toolbar>
          <Light $fill="#fc615c" $edge="#e2463f" />
          <Light $fill="#fdbf41" $edge="#dd9f33" />
          <Light $fill="#33c949" $edge="#27aa34" />
          <ToolButton $w={52} $ml={9}>
            <svg width="24" height="28" viewBox="0 0 24 28"><path d="M15 3 L4 14 L15 25" fill="none" stroke="#737373" strokeWidth="2.800" strokeLinecap="round" /></svg>
          </ToolButton>
          <ToolButton $w={51} $ml={1}>
            <svg width="24" height="28" viewBox="0 0 24 28"><path d="M8 3 L19 14 L8 25" fill="none" stroke="#bdbdbd" strokeWidth="2.600" strokeLinecap="round" /></svg>
          </ToolButton>
          <ToolButton $w={76} $ml={18}>
            <svg width="30" height="26" viewBox="0 0 30 26">
              <rect x="1" y="2" width="28" height="22" rx="1" fill="none" stroke="#696969" strokeWidth="2" />
              <path d="M11 2 V24" stroke="#696969" strokeWidth="2" />
              <path d="M4 6.500 H8 M4 10.500 H8 M4 14.500 H8" stroke="#8c8c8c" strokeWidth="2" />
            </svg>
          </ToolButton>
          <UrlBar>
            <span />
            <span><Fit width={103}>localhost</Fit></span>
            <svg width="30" height="32" viewBox="0 0 30 32">
              <path d="M14 7 A10 10 0 1 0 24 17" fill="none" stroke="#7b7b7b" strokeWidth="2" />
              <path d="M13 1.500 L22 7 L13 12.500 Z" fill="#7b7b7b" />
            </svg>
          </UrlBar>
          <Spacer />
          <ToolButton $w={76}>
            <svg width="26" height="32" viewBox="0 0 26 32">
              <path d="M9 12 H3 V30 H23 V12 H17" fill="none" stroke="#6b6b6b" strokeWidth="2" strokeLinejoin="round" />
              <path d="M13 20 V2.500 M7.500 8 L13 2 L18.500 8" fill="none" stroke="#6b6b6b" strokeWidth="2" />
            </svg>
          </ToolButton>
          <ToolButton $w={76} $ml={14}>
            <svg width="26" height="28" viewBox="0 0 26 28">
              <rect x="2" y="9" width="16" height="16" rx="1.500" fill="none" stroke="#6b6b6b" strokeWidth="2" />
              <path d="M8 6 V3 H24 V19 H21" fill="none" stroke="#6b6b6b" strokeWidth="2" />
            </svg>
          </ToolButton>
        </Toolbar>

        <TabStrip>
          <Tab $w={514}><Fit width={190}>nachkar/Expenses</Fit></Tab>
          <Tab $w={514} $pull={10}><Fit width={418}>java - Apache Tomcat 7.0.14:build-impl....</Fit></Tab>
          <Tab $w={504} $active><Fit width={38}>List</Fit></Tab>
          <Tab $w={490} $pull={2}><Fit width={68}>MAMP</Fit></Tab>
          <Tab $w={488} $pull={4}><Fit width={401}>localhost:8888 / localhost / Expenses...</Fit></Tab>
          <NewTab>
            <svg width="22" height="22" viewBox="0 0 22 22"><path d="M11 0 V22 M0 11 H22" stroke="#69686a" strokeWidth="2" /></svg>
          </NewTab>
        </TabStrip>

        <Page>
          <SignOut><SignText><Fit width={112}>Sign Out</Fit></SignText></SignOut>
          <Heading><Fit width={262}>OPERATIONS</Fit></Heading>
          <Paginator>
            <PageButton><PagerIcon kind="first" /></PageButton>
            <PageButton $ml={4}><PagerIcon kind="prev" /></PageButton>
            <CurrentPage>1</CurrentPage>
            <PageButton $ml={18}><PagerIcon kind="next" /></PageButton>
            <PageButton $ml={4}><PagerIcon kind="last" /></PageButton>
            <RowsSelect>
              10
              <svg width="12" height="24" viewBox="0 0 12 24"><path d="M0.500 10 L6 1 L11.500 10 Z M0.500 14 L6 23 L11.500 14 Z" fill="#434e54" /></svg>
            </RowsSelect>
          </Paginator>
          <Table>
            <HeadRow>
              {columns.map(([name, w]) => <div key={name}><Fit width={w}>{name}</Fit></div>)}
            </HeadRow>
            {rows.map((cells, i) => (
              <Row key={cells[0]} $alt={i % 2 === 1}>
                {cells.map((cell, j) => <div key={j}>{cell}</div>)}
              </Row>
            ))}
          </Table>
          <PageActions>
            <ActionButton $w={130} />
            <ActionButton $w={130} $faded />
          </PageActions>

          <Dialog>
            <DialogHead>
              <Fit width={323}>CREATE NEW OPERATIONS</Fit>
              <svg width="20" height="20" viewBox="0 0 20 20">
                <path d="M4 4 L16 16 M16 4 L4 16" stroke="#868686" strokeWidth="6.500" strokeLinecap="round" />
              </svg>
            </DialogHead>
            <FormRow>
              <Label>Description: <Star>*</Star></Label>
              <Field $focus />
            </FormRow>
            <FormRow $alt>
              <Label>Amount <Star>*</Star></Label>
              <Field>0</Field>
            </FormRow>
            <FormRow>
              <Label>Category <Star>*</Star></Label>
              <Combo $w={156}><ComboValue>Gas</ComboValue><ComboArrow><Arrow /></ComboArrow></Combo>
            </FormRow>
            <FormRow $alt>
              <Label>User <Star>*</Star></Label>
              <Combo $w={118} $disabled><ComboValue>hkr</ComboValue><ComboArrow><Arrow /></ComboArrow></Combo>
            </FormRow>
            <DialogActions>
              <DialogButton $w={108}>Save</DialogButton>
              <DialogButton $w={131}>Cancel</DialogButton>
            </DialogActions>
          </Dialog>
        </Page>
      </BrowserWindow>

      <DockArea>
        <Dock><DockIcons /></Dock>
        <Wallpaper>
          <WallpaperStrip><WideText>COM</WideText></WallpaperStrip>
        </Wallpaper>
      </DockArea>
    </Desktop>
  );
}
